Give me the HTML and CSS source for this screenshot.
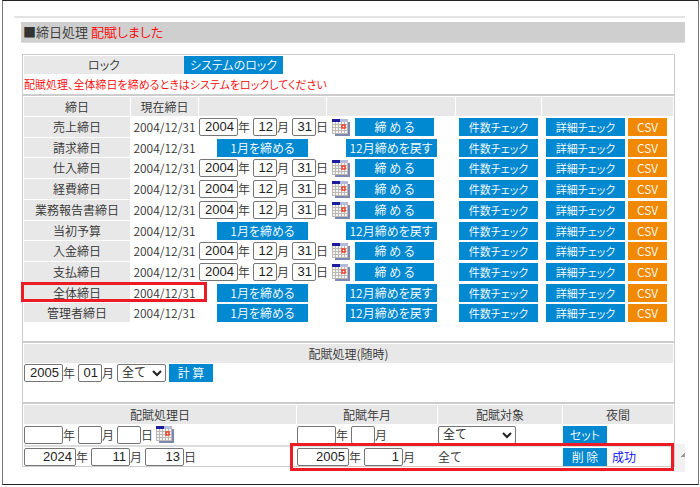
FILE: index.html
```html
<!DOCTYPE html>
<html lang="ja">
<head>
    <meta charset="UTF-8">
    <meta name="viewport" content="width=device-width, initial-scale=1.0">
    <title>締日処理</title>
    <link rel="stylesheet" href="styles.css">
</head>
<body>
    <svg class="sprite" aria-hidden="true">
        <symbol id="calendar" viewBox="0 0 18 17">
            <rect x="3" y="3" width="15" height="14" fill="#7c88b0"/>
            <rect x="0" y="0" width="16" height="15" fill="#f4f4f4"/>
            <path d="M0 .5h16M0 14.5h16M.5 0v15M15.5 0v15M3.5 3v12M6.5 3v12M9.5 3v12M12.5 3v12M0 5.500h16M0 8.500h16M0 11.500h16" stroke="#bdb8b4" fill="none"/>
            <rect x="0" y="0" width="8" height="3" fill="#1c1c9c"/>
            <rect x="8" y="0" width="8" height="3" fill="#b4bcdc"/>
            <rect x="10" y="6" width="3" height="3" fill="#fff" stroke="#f03c28" stroke-width="1.500"/>
        </symbol>
    </svg>

    <div class="frame">
        <header class="page-header">
            <h1>■締日処理 <span class="red">配賦しました</span></h1>
        </header>

        <div class="panel">
            <div class="lock-row">
                <span class="lock-label">ロック</span>
                <button class="btn lock-btn">システムのロック</button>
            </div>
            <p class="note red">配賦処理、全体締日を締めるときはシステムをロックしてください</p>

            <table class="closing">
                <colgroup>
                    <col class="c-name">
                    <col class="c-date">
                    <col class="c-input">
                    <col class="c-action">
                    <col class="c-count">
                    <col>
                </colgroup>
                <thead>
                    <tr><th>締日</th><th>現在締日</th><th></th><th></th><th></th><th></th></tr>
                </thead>
                <tbody id="closing-rows"></tbody>
            </table>

            <table class="calc">
                <thead>
                    <tr><th>配賦処理(随時)</th></tr>
                </thead>
                <tbody>
                    <tr>
                        <td>
                            <div class="fields">
                                <label><input class="w-year" type="text" value="2005">年</label>
                                <label><input class="w-day" type="text" value="01">月</label>
                                <select class="w-select" aria-label="配賦対象"><option>全て</option></select>
                                <button class="btn w-small">計 算</button>
                            </div>
                        </td>
                    </tr>
                </tbody>
            </table>

            <table class="schedule">
                <colgroup>
                    <col class="s-date">
                    <col class="s-month">
                    <col class="s-target">
                    <col>
                </colgroup>
                <thead>
                    <tr><th>配賦処理日</th><th>配賦年月</th><th>配賦対象</th><th>夜間</th></tr>
                </thead>
                <tbody>
                    <tr>
                        <td>
                            <div class="fields">
                                <label><input class="w-year" type="text">年</label>
                                <label><input class="w-day" type="text">月</label>
                                <label><input class="w-day" type="text">日</label>
                                <button class="cal" aria-label="カレンダー"><svg><use href="#calendar"/></svg></button>
                            </div>
                        </td>
                        <td>
                            <div class="fields">
                                <label><input class="w-year" type="text">年</label>
                                <label><input class="w-day" type="text">月</label>
                            </div>
                        </td>
                        <td><select class="w-target" aria-label="配賦対象"><option>全て</option></select></td>
                        <td><button class="btn w-small">セット</button></td>
                    </tr>
                    <tr class="result">
                        <td>
                            <div class="fields">
                                <label><input class="w-wide" type="text" value="2024">年</label>
                                <label><input class="w-year" type="text" value="11">月</label>
                                <label><input class="w-year" type="text" value="13">日</label>
                            </div>
                        </td>
                        <td class="marked">
                            <div class="fields">
                                <label><input class="w-wide" type="text" value="2005">年</label>
                                <label><input class="w-year" type="text" value="1">月</label>
                            </div>
                            <div class="mark mark-result"></div>
                        </td>
                        <td>全て</td>
                        <td>
                            <div class="fields">
                                <button class="btn w-small">削 除</button>
                                <span class="success">成功</span>
                            </div>
                        </td>
                    </tr>
                </tbody>
            </table>
            <div class="scroll-end"></div>
        </div>
    </div>

    <script>
        const rows = [
            { name: "売上締日", type: "date" },
            { name: "請求締日", type: "month" },
            { name: "仕入締日", type: "date" },
            { name: "経費締日", type: "date" },
            { name: "業務報告書締日", type: "date" },
            { name: "当初予算", type: "month" },
            { name: "入金締日", type: "date" },
            { name: "支払締日", type: "date" },
            { name: "全体締日", type: "month", marked: true },
            { name: "管理者締日", type: "month" }
        ];

        const dateCells = `
            <td>
                <div class="fields">
                    <label><input class="w-year" type="text" value="2004">年</label>
                    <label><input class="w-day" type="text" value="12">月</label>
                    <label><input class="w-day" type="text" value="31">日</label>
                </div>
            </td>
            <td>
                <div class="close-action">
                    <button class="cal" aria-label="カレンダー"><svg><use href="#calendar"/></svg></button>
                    <button class="btn w-check">締 め る</button>
                </div>
            </td>`;

        const monthCells = `
            <td><button class="btn w-month">1月を締める</button></td>
            <td><button class="btn w-month">12月締めを戻す</button></td>`;

        document.getElementById("closing-rows").innerHTML = rows.map(row => `
            <tr class="${row.type}">
                <th class="${row.marked ? "marked" : ""}" scope="row">${row.name}${row.marked ? '<div class="mark mark-name"></div>' : ""}</th>
                <td class="center">2004/12/31</td>
                ${row.type === "date" ? dateCells : monthCells}
                <td><button class="btn w-check check centered">件数チェック</button></td>
                <td>
                    <div class="detail-action">
                        <button class="btn w-check check">詳細チェック</button>
                        <button class="btn csv">CSV</button>
                    </div>
                </td>
            </tr>`).join("");
    </script>
</body>
</html>
```
FILE: styles.css
```css
* {
    box-sizing: border-box;
}

body {
    margin: 0;
    padding: 0 1px 0 2px;
    background-color: #fff;
    color: #333;
    font-family: "Noto Sans CJK JP", sans-serif;
    font-size: 12px;
    font-weight: 350;
    line-height: 16px;
}

.sprite {
    display: none;
}

.frame {
    border: 1px solid #222;
    border-left-color: #777;
    border-right-color: #777;
    padding: 15px 13px 17px 11px;
}

.page-header {
    border-top: 2px solid #e4e4e4;
    padding: 4px 0 0 7px;
}

h1 {
    margin: 0;
    padding-left: 2px;
    border-bottom: 1px solid #ddd;
    background-color: #cfcfcf;
    font-size: 13px;
    font-weight: 350;
    line-height: 20px;
    font-feature-settings: "palt";
}

.red {
    color: #f00;
}

.panel {
    position: relative;
    margin: 11px 10px 0 8px;
    border: 1px solid #ccc;
}

.lock-row {
    display: flex;
    padding: 1px;
}

.lock-label {
    width: 160px;
    background-color: #e8e8e8;
    text-align: center;
    line-height: 18px;
    font-feature-settings: "palt";
}

.note {
    margin: 0;
    padding: 1px 1px 2px;
    border-bottom: 2px solid #ccc;
    font-size: 11px;
    font-feature-settings: "palt";
}

table {
    width: 100%;
    table-layout: fixed;
    border-spacing: 1px;
}

th,
td {
    padding: 0;
    text-align: left;
    vertical-align: middle;
}

th {
    height: 19px;
    background-color: #e8e8e8;
    font-weight: 350;
    text-align: center;
}

.center {
    text-align: center;
}

.c-name {
    width: 106px;
}

.c-date {
    width: 67px;
}

.c-input {
    width: 127px;
}

.c-action {
    width: 128px;
}

.c-count {
    width: 85px;
}

.closing {
    padding-bottom: 18px;
}

.closing .date th {
    height: 20px;
}

.fields,
.close-action,
.detail-action {
    display: flex;
    align-items: center;
}

.fields {
    gap: 3px;
}

.close-action {
    gap: 5px;
    padding-left: 5px;
}

.detail-action {
    gap: 3px;
    padding-left: 4px;
}

label {
    display: flex;
    align-items: center;
}

input,
select {
    height: 18px;
    margin: 0;
    border: 1px solid #767676;
    border-radius: 2px;
    background-color: #fff;
    color: #222;
    font-family: "Liberation Sans", "Noto Sans CJK JP", sans-serif;
    font-size: 13px;
    font-weight: 350;
}

input {
    padding: 0 3px 1px;
    text-align: right;
}

select {
    display: block;
    padding: 0;
    font-size: 12px;
}

button {
    border: none;
    padding: 0;
    background: none;
    font-family: inherit;
    cursor: pointer;
}

.btn {
    display: block;
    height: 18px;
    background-color: #0088d0;
    color: #fff;
    font-size: 12px;
    font-weight: 350;
    line-height: 18px;
    white-space: nowrap;
    font-feature-settings: "palt";
}

.btn.check {
    font-size: 11px;
}

.btn.csv {
    width: 39px;
    background-color: #f08800;
}

.cal,
.cal svg {
    display: block;
    width: 18px;
    height: 17px;
}

.lock-btn {
    width: 99px;
}

.w-year {
    width: 39px;
}

.w-day {
    width: 24px;
}

.w-wide {
    width: 52px;
}

.w-check {
    width: 79px;
}

.w-month {
    width: 91px;
    margin: 0 auto;
}

.centered {
    margin: 0 auto;
}

.w-small {
    width: 44px;
}

.w-select {
    width: 49px;
}

.w-target {
    width: 78px;
}

.calc,
.schedule {
    border-top: 2px solid #ccc;
}

.calc {
    padding-bottom: 19px;
}

.s-date {
    width: 272px;
}

.s-month {
    width: 140px;
}

.s-target {
    width: 124px;
}

.schedule {
    border-spacing: 1px 0;
    padding-top: 1px;
}

.schedule td {
    height: 21px;
}

.schedule .result td {
    border-top: 2px solid #ddd;
}

.success {
    padding-left: 2px;
    color: #00f;
}

/* red frames around the closed date and the finished run */
.marked {
    position: relative;
}

.mark {
    position: absolute;
    border: 3px solid #ed1c24;
    pointer-events: none;
}

.mark-name {
    top: -1px;
    left: -3px;
    width: 186px;
    height: 20px;
}

.mark-result {
    top: -4px;
    left: -7px;
    width: 384px;
    height: 28px;
}

.scroll-end {
    position: absolute;
    right: -11px;
    bottom: -6px;
    width: 10px;
    height: 28px;
    background: #f1f1f1 linear-gradient(135deg, transparent 50%, #999 50%) right 9px / 4px 4px no-repeat;
}
```
